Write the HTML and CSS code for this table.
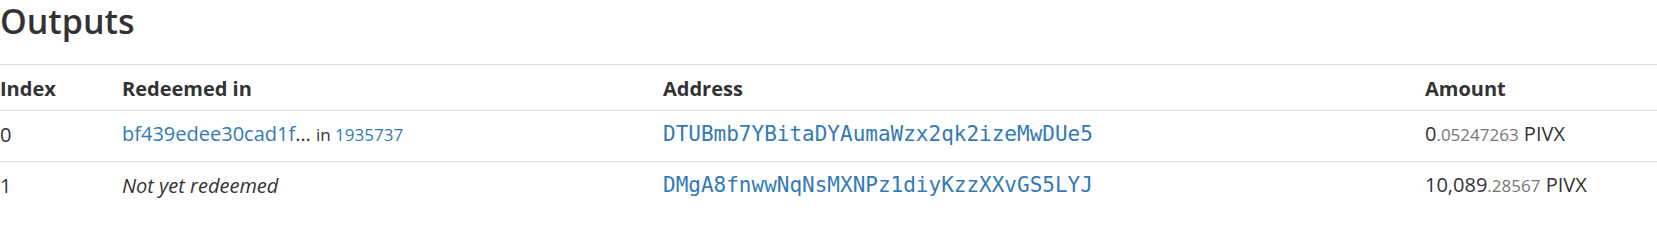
FILE: index.html
```html
<!DOCTYPE html>
<html>
<head>
<meta charset="utf-8">
<title>Outputs</title>
<link rel="stylesheet" href="styles.css">
</head>
<body>
<section class="outputs">
  <h2 class="title">Outputs</h2>
  <table class="out-table">
    <colgroup>
      <col class="c-index">
      <col class="c-redeemed">
      <col class="c-address">
      <col class="c-amount">
    </colgroup>
    <thead>
      <tr>
        <th>Index</th>
        <th>Redeemed in</th>
        <th>Address</th>
        <th>Amount</th>
      </tr>
    </thead>
    <tbody>
      <tr>
        <td>0</td>
        <td><a href="#" class="link">bf439edee30cad1f</a>… <small class="sm">in <a href="#" class="link">1935737</a></small></td>
        <td><a href="#" class="link mono">DTUBmb7YBitaDYAumaWzx2qk2izeMwDUe5</a></td>
        <td>0<span class="dec">.05247263</span> PIVX</td>
      </tr>
      <tr>
        <td>1</td>
        <td><em class="pending">Not yet redeemed</em></td>
        <td><a href="#" class="link mono">DMgA8fnwwNqNsMXNPz1diyKzzXXvGS5LYJ</a></td>
        <td>10,089<span class="dec">.28567</span> PIVX</td>
      </tr>
    </tbody>
  </table>
</section>
</body>
</html>
```
FILE: styles.css
```css
html, body {
  margin: 0;
  padding: 0;
  background: #fff;
}

body {
  font-family: "Open Sans", "Noto Sans", sans-serif;
  font-size: 20px;
  color: #333;
}

.title {
  margin: 0 0 24px;
  padding-top: 2px;
  font-size: 34px;
  line-height: 38px;
  font-weight: 600;
  color: #333;
}

.out-table {
  width: 100%;
  border-collapse: collapse;
  table-layout: fixed;
}

.c-index { width: 122px; }
.c-redeemed { width: 541px; }
.c-address { width: 762px; }

.out-table tr {
  border-top: 1px solid #ddd;
}

.out-table th {
  text-align: left;
  font-weight: 700;
  padding: 9px 0 7px;
  line-height: 29px;
  white-space: nowrap;
}

.out-table td {
  padding: 8px 0 12px;
  line-height: 29px;
  white-space: nowrap;
}

.link {
  color: #337ab7;
  text-decoration: none;
}

.link-short {
  letter-spacing: -0.2px;
}

.mono {
  font-family: "DejaVu Sans Mono", monospace;
  font-size: 21px;
}

.sm {
  font-size: 85%;
}

.dec {
  font-size: 85%;
  color: #777;
}

.pending {
  font-style: italic;
}
```
